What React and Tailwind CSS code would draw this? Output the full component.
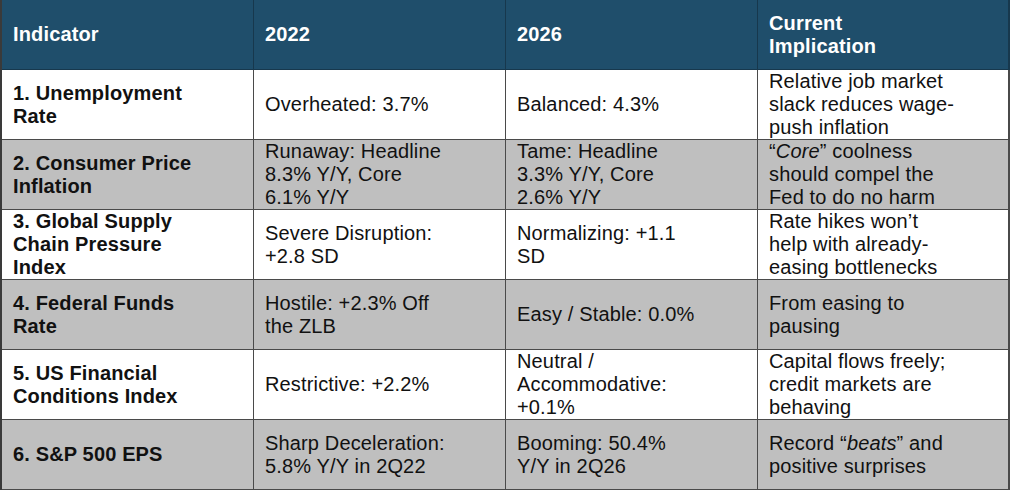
const rows = [
  {
    name: ['1. Unemployment', 'Rate'],
    y22: ['Overheated: 3.7%'],
    y26: ['Balanced: 4.3%'],
    note: ['Relative job market', 'slack reduces wage-', 'push inflation'],
    shade: false,
  },
  {
    name: ['2. Consumer Price', 'Inflation'],
    y22: ['Runaway: Headline', '8.3% Y/Y, Core', '6.1% Y/Y'],
    y26: ['Tame: Headline', '3.3% Y/Y, Core', '2.6% Y/Y'],
    note: [
      <>“<i>Core</i>” coolness</>,
      'should compel the',
      'Fed to do no harm',
    ],
    shade: true,
  },
  {
    name: ['3. Global Supply', 'Chain Pressure', 'Index'],
    y22: ['Severe Disruption:', '+2.8 SD'],
    y26: ['Normalizing: +1.1', 'SD'],
    note: ['Rate hikes won’t', 'help with already-', 'easing bottlenecks'],
    shade: false,
  },
  {
    name: ['4. Federal Funds', 'Rate'],
    y22: ['Hostile: +2.3% Off', 'the ZLB'],
    y26: ['Easy / Stable: 0.0%'],
    note: ['From easing to', 'pausing'],
    shade: true,
  },
  {
    name: ['5. US Financial', 'Conditions Index'],
    y22: ['Restrictive: +2.2%'],
    y26: ['Neutral /', 'Accommodative:', '+0.1%'],
    note: ['Capital flows freely;', 'credit markets are', 'behaving'],
    shade: false,
  },
  {
    name: ['6. S&P 500 EPS'],
    y22: ['Sharp Deceleration:', '5.8% Y/Y in 2Q22'],
    y26: ['Booming: 50.4%', 'Y/Y in 2Q26'],
    note: [
      <>Record “<i>beats</i>” and</>,
      'positive surprises',
    ],
    shade: true,
  },
];

function Lines({ lines }) {
  return lines.map((line, i) => <div key={i}>{line}</div>);
}

function Cell({ children, className = '' }) {
  return (
    <div className={`flex h-[70px] flex-col justify-center border-r border-b border-[#4a4a4a] px-[11px] ${className}`}>
      {children}
    </div>
  );
}

export default function App() {
  return (
    <div className="h-[495px] w-[1013px] bg-white" style={{ fontFamily: '"Liberation Sans", Arial, sans-serif' }}>
      <div className="grid w-[1010px] grid-cols-[252px_252px_252px_252px] border-l-2 border-[#3a3a3a] text-[20px] leading-[23px] tracking-[0.15px] text-[#111]">
        <Cell className="bg-[#1f4e6b] border-[#17384d] font-bold text-white">Indicator</Cell>
        <Cell className="bg-[#1f4e6b] border-[#17384d] font-bold text-white">2022</Cell>
        <Cell className="bg-[#1f4e6b] border-[#17384d] font-bold text-white">2026</Cell>
        <Cell className="bg-[#1f4e6b] border-r-2 border-[#17384d] font-bold text-white">
          <Lines lines={['Current', 'Implication']} />
        </Cell>
        {rows.map((row, i) => {
          const bg = row.shade ? 'bg-[#bfbfbf]' : 'bg-white';
          return [
            <Cell key={`${i}a`} className={`${bg} font-bold`}><Lines lines={row.name} /></Cell>,
            <Cell key={`${i}b`} className={bg}><Lines lines={row.y22} /></Cell>,
            <Cell key={`${i}c`} className={bg}><Lines lines={row.y26} /></Cell>,
            <Cell key={`${i}d`} className={`${bg} border-r-2`}><Lines lines={row.note} /></Cell>,
          ];
        })}
      </div>
    </div>
  );
}
